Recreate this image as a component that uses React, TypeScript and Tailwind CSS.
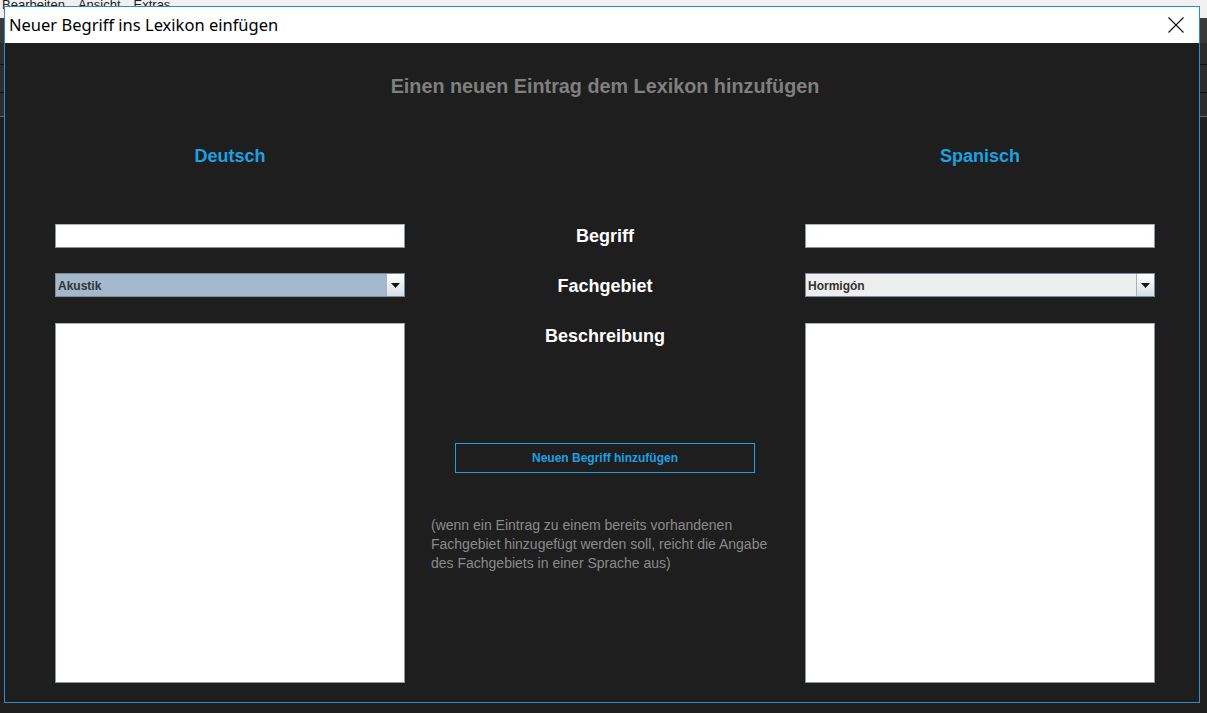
import React from "react";

function ComboBox({ value, active }: { value: string; active?: boolean }) {
  return (
    <div
      className={
        "flex h-[24px] items-stretch border border-[#7f8b98] " +
        (active ? "bg-[#a3b8cc]" : "bg-[#eeeeee]")
      }
    >
      <div className="flex flex-1 items-center pl-[2px] pt-[1px] text-[12px] font-bold text-[#333333]">
        {value}
      </div>
      <div className="flex w-[18px] items-center justify-center border-l border-[#a7b3bf] bg-gradient-to-b from-white to-[#d6dee6]">
        <svg width="9" height="5" viewBox="0 0 9 5">
          <path d="M0 0 L9 0 L4.5 5 Z" fill="#111" />
        </svg>
      </div>
    </div>
  );
}

function TextField() {
  return (
    <div className="h-[24px] border border-[#8a949e] border-t-[#a9b1b9] bg-white" />
  );
}

export default function App() {
  return (
    <div
      className="relative h-[713px] w-[1207px] overflow-hidden bg-[#1e1e1e]"
      style={{ fontFamily: '"Liberation Sans", Arial, sans-serif' }}
    >
      {/* app in background */}
      <div className="flex h-[18px] items-start gap-[13px] overflow-hidden bg-[#f0f0f0] pl-[2px] text-[13px] leading-[15px] text-[#222]">
        <span className="-mt-[3px]">Bearbeiten</span>
        <span className="-mt-[3px]">Ansicht</span>
        <span className="-mt-[3px]">Extras</span>
      </div>
      <div className="h-[25px] bg-[#3a3a3a]" />
      <div className="h-[22px] border-b border-[#111] bg-[#2c2c2c]" />
      <div className="h-[28px] border-b border-[#111] bg-[#2c2c2c]" />
      <div className="h-[24px] border-b border-[#666] bg-[#2c2c2c]" />

      {/* dialog */}
      <div className="absolute left-[4px] top-[6px] flex h-[697px] w-[1196px] flex-col border border-[#2b8ad6] bg-[#1e1e1e]">
        <div className="flex h-[36px] items-center justify-between bg-white pl-[4px]">
          <span
            className="text-[16.5px] text-black"
            style={{ fontFamily: '"Noto Sans", "Open Sans", sans-serif' }}
          >
            Neuer Begriff ins Lexikon einfügen
          </span>
          <div className="flex h-[36px] w-[46px] items-center justify-center">
            <svg width="16" height="16" viewBox="0 0 16 16">
              <path d="M0.5 0.5 L15.5 15.5 M15.5 0.5 L0.5 15.5" stroke="#111" strokeWidth="1.1" />
            </svg>
          </div>
        </div>

        <div className="flex flex-col pl-[50px]">
          <h1 className="mt-[32px] w-[1100px] text-center text-[19.8px] font-bold leading-[23px] text-[#7f7f7f]">
            Einen neuen Eintrag dem Lexikon hinzufügen
          </h1>

          <div className="mt-[48px] grid grid-cols-[350px_400px_350px]">
            <div className="text-center text-[18px] font-bold leading-[21px] text-[#1ba1e2]">
              Deutsch
            </div>
            <div />
            <div className="text-center text-[18px] font-bold leading-[21px] text-[#1ba1e2]">
              Spanisch
            </div>
          </div>

          <div className="mt-[57px] grid grid-cols-[350px_400px_350px] grid-rows-[24px_24px_361px] gap-y-[25px]">
            <TextField />
            <div className="flex items-center justify-center text-[18px] font-bold text-white">
              Begriff
            </div>
            <TextField />

            <ComboBox value="Akustik" active />
            <div className="flex items-center justify-center pt-[3px] text-[18px] font-bold text-white">
              Fachgebiet
            </div>
            <ComboBox value="Hormigón" />

            <div className="mt-[1px] border border-[#8a949e] border-t-[#a9b1b9] bg-white" />
            <div className="mt-[1px] flex flex-col items-center">
              <div className="mt-[2px] text-[18px] font-bold leading-[22px] text-white">
                Beschreibung
              </div>
              <button className="mt-[96px] h-[30px] w-[300px] border border-[#1ba1e2] text-[12px] font-bold text-[#1ba1e2]">
                Neuen Begriff hinzufügen
              </button>
              <p className="mt-[43px] w-full pl-[26px] text-[14px] leading-[19px] text-[#8a8a8a]">
                (wenn ein Eintrag zu einem bereits vorhandenen
                <br />
                Fachgebiet hinzugefügt werden soll, reicht die Angabe
                <br />
                des Fachgebiets in einer Sprache aus)
              </p>
            </div>
            <div className="mt-[1px] border border-[#8a949e] border-t-[#a9b1b9] bg-white" />
          </div>
        </div>
      </div>
    </div>
  );
}
